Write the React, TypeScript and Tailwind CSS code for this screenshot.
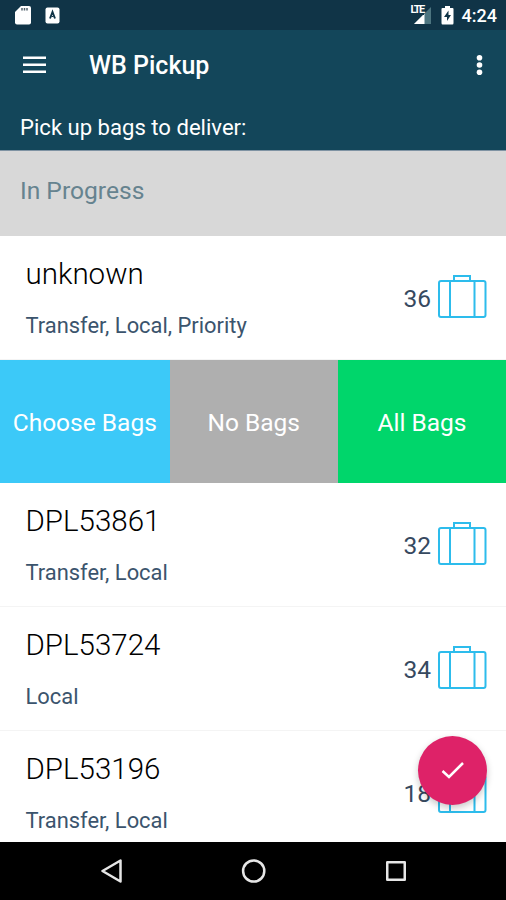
import React from 'react';

const bags = [
  { name: "unknown", types: "Transfer, Local, Priority", count: 36 },
  { name: "DPL53861", types: "Transfer, Local", count: 32 },
  { name: "DPL53724", types: "Local", count: 34 },
  { name: "DPL53196", types: "Transfer, Local", count: 18 },
];

const Suitcase = () => (
  <svg className="block" width="50" height="46" viewBox="0 0 50 46" fill="none" stroke="#2dbcec" strokeWidth="2">
    <rect x="2" y="7" width="46.500" height="36" rx="2" />
    <path d="M17 7V2H33V7M13 7V43M37.500 7V43" />
  </svg>
)

const BagRow = ({ name, types, count }: any) => {
  return (
    <div className="flex h-[124px] shrink-0 justify-between pl-[25.500px] pr-[19px] border-b border-[#f4f4f4] bg-white">
      <div>
        <div className="mt-[20px] h-[36px] text-[29.500px] font-light leading-[36px] text-[#000]">{name}</div>
        <div className="mt-[20px] h-[28px] text-[21.900px] leading-[27px] text-[#3b546d]">{types}</div>
      </div>
      <div className="flex pt-[38px]">
        <div className="mr-[6px] mt-[8px] h-[32px] text-[24.500px] leading-[34px] text-[#36495f]">{count}</div>
        <Suitcase />
      </div>
    </div>
  )
}

const StatusBar = () => {
  return (
    <div className="flex h-[30px] shrink-0 items-center bg-[#103447] pl-[15px] pr-[9px] text-white">
      <svg width="17" height="20" viewBox="0 0 17 20">
        <path d="M6 1H14Q16 1 16 3V17.500Q16 19.500 14 19.500H2Q0 19.500 0 17.500V7Z" fill="#fff" />
        <path d="M7 3V5.500M9.500 3V5.500M12 3V5.500" stroke="#51616b" strokeWidth="1.500" />
      </svg>
      <svg className="ml-[13px]" width="15" height="17" viewBox="0 0 15 17">
        <rect x="0.500" y="0.500" width="14" height="16" rx="2" fill="#fff" />
        <path d="M5 11.500L7.500 5L10 11.500" fill="none" stroke="#103447" strokeWidth="1.900" />
        <path d="M6.500 9.500H8.500" stroke="#103447" />
      </svg>
      <div className="ml-auto flex items-center">
        <div className="relative h-[20px] w-[23px]">
          <svg width="23" height="20" viewBox="0 0 23 20">
            <path d="M5 19L22 2V19Z" fill="#4d7580" />
            <path d="M5 19L15.500 8.500V19Z" fill="#fff" />
          </svg>
          <span className="absolute left-[2px] top-0 bg-[#103447] text-[11px] font-bold leading-[10px] tracking-[-1.500px]">LTE</span>
        </div>
        <svg className="ml-[9px]" width="13" height="20" viewBox="0 0 13 20">
          <path d="M4 1H9V3H11.500Q12.500 3 12.500 4V18Q12.500 19.500 11.500 19.500H1.500Q0.500 19.500 0.500 18V4Q0.500 3 1.500 3H4Z" fill="#fff" />
          <path d="M7.500 5.500L3 12H6V16L10 10H7.500Z" fill="#103447" />
        </svg>
        <span className="ml-[8px] mt-[2px] text-[18px] font-medium leading-[20px]">4:24</span>
      </div>
    </div>
  )
}

const App = () => {
  return (
    <div className="relative flex h-[900px] w-[506px] flex-col overflow-hidden bg-white font-['Roboto',sans-serif]">
      <StatusBar />

      <div className="h-[120px] shrink-0 bg-[#13465a] text-white">
        <div className="flex h-[70px] items-center pl-[23px] pr-[23px]">
          <svg width="23" height="18" viewBox="0 0 23 18" stroke="#fff" strokeWidth="2.500">
            <path d="M0 1.800H23M0 8.800H23M0 15.800H23" />
          </svg>
          <div className="ml-[43px] mt-[2px] text-[25px] font-medium leading-[30px]">WB Pickup</div>
          <svg className="ml-auto" width="7" height="21" viewBox="0 0 7 21" fill="#fff">
            <circle cx="3.500" cy="2.800" r="2.800" />
            <circle cx="3.500" cy="10" r="2.800" />
            <circle cx="3.500" cy="17.300" r="2.800" />
          </svg>
        </div>
        <div className="pl-[20px] pt-[12px] text-[22.100px] leading-[31px]">Pick up bags to deliver:</div>
      </div>

      <div className="h-[86px] shrink-0 border-t border-[#7f93a3] bg-[#d8d8d8] pl-[20px] pt-[24px] text-[24.600px] leading-[32px] text-[#66838f]">
        In Progress
      </div>

      <div className="flex h-[606px] shrink-0 flex-col overflow-hidden">
        <BagRow {...bags[0]} />
        <div className="grid h-[123px] shrink-0 grid-cols-[169.500px_168.500px_168px] text-center text-[24.500px] leading-[126px] text-white">
          <div className="bg-[#3cc9f8]">Choose Bags</div>
          <div className="bg-[#afafaf]">No Bags</div>
          <div className="bg-[#00d66b]">All Bags</div>
        </div>
        {bags.slice(1).map((bag) => <BagRow key={bag.name} {...bag} />)}
      </div>

      <div className="flex h-[58px] shrink-0 items-center bg-black pb-px pl-[101px]">
        <svg width="22" height="24" viewBox="0 0 22 24" fill="none" stroke="#e6e6e6" strokeWidth="2.500" strokeLinejoin="round">
          <path d="M1.500 12L19.500 1.500V22.500Z" />
        </svg>
        <svg className="ml-[118px]" width="26" height="26" viewBox="0 0 26 26" fill="none" stroke="#e6e6e6" strokeWidth="2.500">
          <circle cx="12.700" cy="13" r="10.600" />
        </svg>
        <svg className="ml-[119px]" width="20" height="20" viewBox="0 0 20 20" fill="none" stroke="#e6e6e6" strokeWidth="2.500" strokeLinejoin="round">
          <rect x="1.250" y="1.250" width="17.500" height="17.500" />
        </svg>
      </div>

      {/* confirm button */}
      <button className="absolute left-[418px] top-[735.500px] flex h-[69px] w-[69px] items-center justify-center rounded-full bg-[#de2268] shadow-[0_3px_7px_rgba(0,0,0,0.22)]" type="button">
        <svg width="24" height="20" viewBox="0 0 24 20" fill="none" stroke="#fff" strokeWidth="2.500">
          <path d="M1.500 11L8 17L22 3" />
        </svg>
      </button>
    </div>
  )
}

export default App
